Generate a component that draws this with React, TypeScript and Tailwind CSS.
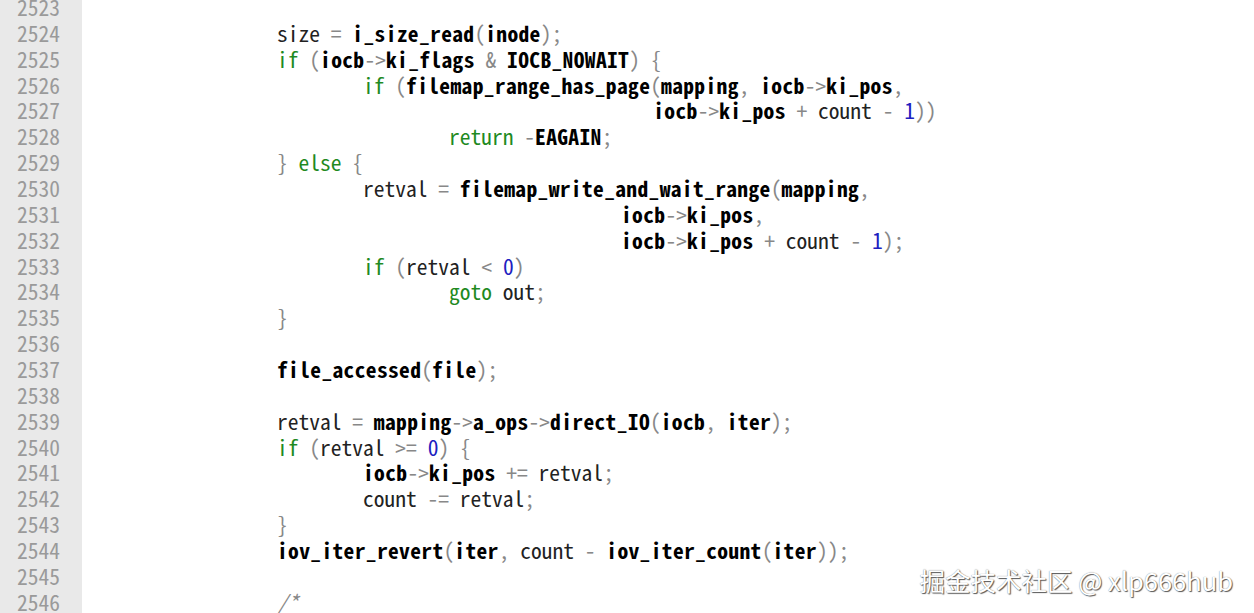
import React from 'react'

const lines: [number, string][] = [
  [2523, ''],
  [2524, '                size = i_size_read(inode);'],
  [2525, '                if (iocb->ki_flags & IOCB_NOWAIT) {'],
  [2526, '                        if (filemap_range_has_page(mapping, iocb->ki_pos,'],
  [2527, '                                                   iocb->ki_pos + count - 1))'],
  [2528, '                                return -EAGAIN;'],
  [2529, '                } else {'],
  [2530, '                        retval = filemap_write_and_wait_range(mapping,'],
  [2531, '                                                iocb->ki_pos,'],
  [2532, '                                                iocb->ki_pos + count - 1);'],
  [2533, '                        if (retval < 0)'],
  [2534, '                                goto out;'],
  [2535, '                }'],
  [2536, ''],
  [2537, '                file_accessed(file);'],
  [2538, ''],
  [2539, '                retval = mapping->a_ops->direct_IO(iocb, iter);'],
  [2540, '                if (retval >= 0) {'],
  [2541, '                        iocb->ki_pos += retval;'],
  [2542, '                        count -= retval;'],
  [2543, '                }'],
  [2544, '                iov_iter_revert(iter, count - iov_iter_count(iter));'],
  [2545, ''],
  [2546, '                /*'],
]

const keywords = ['if', 'else', 'return', 'goto']
const plain = ['size', 'retval', 'count', 'out']

function Line({ text }: { text: string }) {
  const parts = text.match(/\/\*|[A-Za-z_][A-Za-z0-9_]*|[0-9]+|\s+|->|./g) || []
  return (
    <>
      {parts.map((p, i) => {
        if (/^\s+$/.test(p)) return <span key={i}>{p}</span>
        if (p === '/*') return <span key={i} className="text-[#888] italic">{p}</span>
        if (/^[0-9]+$/.test(p)) return <span key={i} className="text-[#2020c0]">{p}</span>
        if (/^[A-Za-z_]/.test(p)) {
          if (keywords.includes(p)) return <span key={i} className="text-[#1f8a1f]">{p}</span>
          if (plain.includes(p)) return <span key={i} className="text-[#222]">{p}</span>
          return <span key={i} className="font-bold text-black tracking-[0.35px]">{p}</span>
        }
        return <span key={i} className="text-[#888]">{p}</span>
      })}
    </>
  )
}

export default function App() {
  return (
    <div className="relative h-[613px] w-full overflow-hidden bg-white font-['Noto_Sans_Mono_CJK_SC','Liberation_Mono',monospace] text-[21.5px] leading-[25.86px]">
      <div className="flex h-full">
        <div className="w-[82px] shrink-0 bg-[#e9e9e9] pl-[17px] text-[#9a9a9a]">
          <div className="-mt-[6px]">
            {lines.map(([n]) => (
              <div key={n} className="h-[25.86px]">{n}</div>
            ))}
          </div>
        </div>
        <div className="pl-[23px] whitespace-pre">
          <div className="-mt-[6px]">
            {lines.map(([n, t]) => (
              <div key={n} className="h-[25.86px]">
                <Line text={t} />
              </div>
            ))}
          </div>
        </div>
      </div>
      <div className="absolute right-[21px] bottom-[21px] font-['Noto_Sans_CJK_SC',sans-serif] text-[25.5px] leading-none text-white [text-shadow:1px_1px_1px_#555,0_0_1px_#777]">
        掘金技术社区 @ xlp666hub
      </div>
    </div>
  )
}
